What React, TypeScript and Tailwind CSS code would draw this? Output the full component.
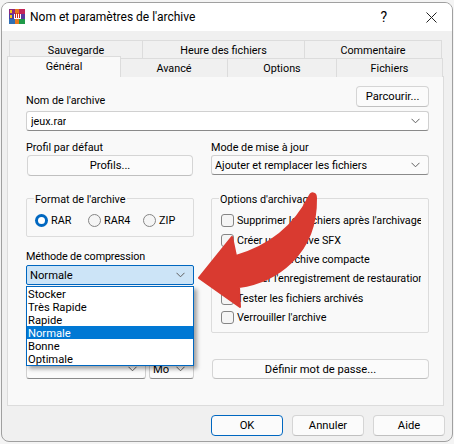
import React from "react";

const font = { fontFamily: 'Roboto, "Open Sans", sans-serif' };

function Chevron({ className = "" }: { className?: string }) {
  return (
    <svg width="9" height="6" viewBox="0 0 9 6" className={className} fill="none">
      <path d="M0.5 0.8 L4.5 4.8 L8.5 0.8" stroke="#5f5f5f" strokeWidth="1" />
    </svg>
  );
}

function Combo({ text, className = "" }: { text: string; className?: string }) {
  return (
    <div className={`flex items-center justify-between rounded-[3px] border border-[#d0d0d0] border-b-[#8a8a8a] bg-[#fbfbfb] pl-[3px] pr-[8px] ${className}`}>
      <span className="truncate">{text}</span>
      <Chevron className="shrink-0" />
    </div>
  );
}

function Btn({ text, className = "" }: { text: string; className?: string }) {
  return (
    <div className={`flex items-center justify-center rounded-[4px] border border-[#d5d5d5] border-b-[#c0c0c0] bg-[#fbfbfb] text-[11.2px] ${className}`}>
      {text}
    </div>
  );
}

function Radio({ label, checked = false, className = "" }: { label: string; checked?: boolean; className?: string }) {
  return (
    <div className={`flex items-center gap-[3px] ${className}`}>
      {checked ? (
        <span className="flex h-[13px] w-[13px] items-center justify-center rounded-full bg-[#0067c0]">
          <span className="h-[7px] w-[7px] rounded-full bg-white" />
        </span>
      ) : (
        <span className="h-[13px] w-[13px] rounded-full border border-[#858585] bg-[#f5f5f5]" />
      )}
      <span>{label}</span>
    </div>
  );
}

function Check({ label }: { label: string }) {
  return (
    <div className="flex h-[19.4px] items-center gap-[3px] whitespace-nowrap tracking-[-0.05px]">
      <span className="h-[13px] w-[13px] shrink-0 rounded-[3px] border border-[#858585] bg-[#f5f5f5]" />
      <span>{label}</span>
    </div>
  );
}

function Tab({ text, className = "" }: { text: string; className?: string }) {
  return (
    <div className={`flex items-center justify-center border border-b-0 border-[#dcdcdc] bg-[#f0f0f0] pt-[1px] ${className}`}>{text}</div>
  );
}

function RarIcon() {
  return (
    <svg width="16" height="16" viewBox="0 0 16 16" className="shrink-0">
      <rect x="0" y="0" width="6" height="5" fill="#8e2a7e" />
      <rect x="0" y="5" width="6" height="5" fill="#4a3fa5" />
      <rect x="0" y="10" width="6" height="5" fill="#2f6fb5" />
      <rect x="1" y="1" width="2" height="3" fill="#f5c518" />
      <rect x="1" y="6" width="2" height="3" fill="#f5c518" />
      <rect x="6" y="0" width="4" height="15" fill="#e8781e" />
      <rect x="10" y="0" width="6" height="5" fill="#c4245a" />
      <rect x="10" y="5" width="6" height="5" fill="#5a3aa0" />
      <rect x="10" y="10" width="6" height="5" fill="#1f9a48" />
      <rect x="5" y="5" width="7" height="5" fill="#ffffff" />
      <rect x="6" y="4" width="1" height="5" fill="#c8281e" />
      <rect x="8" y="4" width="1" height="5" fill="#c8281e" />
      <rect x="10" y="4" width="1" height="5" fill="#c8281e" />
    </svg>
  );
}

export default function App() {
  const items = ["Stocker", "Très Rapide", "Rapide", "Normale", "Bonne", "Optimale"];
  return (
    <div className="relative h-[444px] w-[454px] overflow-hidden bg-[#f4f4f4] pl-[1px] pt-[2px] text-[10.8px] leading-[13px] text-black" style={font}>
      <div className="flex h-[440px] w-[452px] flex-col overflow-hidden rounded-[8px] border border-[#a0a0a0] bg-[#f0f0f0]">
        <div className="flex h-[28px] shrink-0 items-center bg-white pl-[7px]">
          <RarIcon />
          <span className="ml-[5px] text-[12px]">Nom et paramètres de l'archive</span>
          <span className="ml-auto mr-[39px] text-[14px]">?</span>
          <svg width="11" height="11" viewBox="0 0 11 11" className="mr-[15px]" fill="none">
            <path d="M0.5 0.5 L10.5 10.5 M10.5 0.5 L0.5 10.5" stroke="#222" strokeWidth="1" />
          </svg>
        </div>

        <div className="flex flex-col pl-[5px] pt-[9px]">
          <div className="ml-[2px] flex h-[18px] w-[433px]">
            <Tab text="Sauvegarde" className="w-[134px]" />
            <Tab text="Heure des fichiers" className="w-[162px] border-l-0" />
            <Tab text="Commentaire" className="w-[137px] border-l-0" />
          </div>
          <div className="relative z-10 -mb-[1px] -mt-[2px] flex h-[21px] items-end">
            <div className="flex h-[21px] w-[114px] items-center justify-center border border-b-0 border-[#dcdcdc] bg-[#f9f9f9] pb-[1px]">Général</div>
            <Tab text="Avancé" className="h-[19px] w-[107px] border-l-0" />
            <Tab text="Options" className="h-[19px] w-[109px] border-l-0" />
            <Tab text="Fichiers" className="h-[19px] w-[106px] border-l-0" />
          </div>

          <div className="h-[330px] w-[437px] border border-[#dcdcdc] bg-[#f9f9f9] pl-[18px] pt-[9px]">
            <div className="flex h-[21px] w-[403px] items-end justify-between">
              <span>Nom de l'archive</span>
              <Btn text="Parcourir..." className="h-[21px] w-[73px]" />
            </div>
            <Combo text="jeux.rar" className="mt-[4px] h-[20px] w-[403px] bg-white pl-[4px]" />

            <div className="mt-[8px] flex gap-[17px]">
              <div className="flex w-[168px] flex-col">
                <div className="flex h-[16px] items-center">Profil par défaut</div>
                <Btn text="Profils..." className="ml-[1px] h-[21px] w-[166px]" />
                <div className="relative mt-[22px] flex h-[39px] items-center rounded-[2px] border border-[#dcdcdc] pl-[8px] pt-[5px]">
                  <span className="absolute -top-[6px] left-[7px] bg-[#f9f9f9] px-[1px]">Format de l'archive</span>
                  <Radio label="RAR" checked className="w-[53px]" />
                  <Radio label="RAR4" className="w-[55px]" />
                  <Radio label="ZIP" />
                </div>
                <div className="mt-[11px] flex h-[16px] items-center pt-[1px] tracking-[-0.15px]">Méthode de compression</div>
                <div className="relative mt-[1px] h-[20px]">
                  <div className="flex h-[20px] items-center justify-between rounded-[2px] border border-[#0067c0] bg-[#cce4f7] pl-[3px] pr-[8px] text-[11.2px]">
                    <span>Normale</span>
                    <Chevron />
                  </div>
                  <div className="absolute left-0 top-[21px] z-20 w-[168px] border border-[#0067c0] bg-white text-[11.2px] shadow-[3px_3px_4px_rgba(0,0,0,0.35)]">
                    {items.map((it) => (
                      <div key={it} className={`flex h-[13px] items-center pl-[1px] pt-[1px] ${it === "Normale" ? "bg-[#0078d4] text-white" : ""}`}>{it}</div>
                    ))}
                  </div>
                </div>
                <div className="mt-[74px] flex h-[20px] gap-[3px]">
                  <Combo text="" className="w-[120px]" />
                  <Combo text="Mo" className="w-[45px] pl-[2px] text-[11.2px]" />
                </div>
              </div>

              <div className="flex w-[218px] flex-col">
                <div className="flex h-[16px] items-center">Mode de mise à jour</div>
                <Combo text="Ajouter et remplacer les fichiers" className="h-[20px]" />
                <div className="relative mt-[23px] h-[135px] rounded-[2px] border border-[#dcdcdc] pl-[9px] pr-[7px] pt-[12px]">
                  <span className="absolute -top-[6px] left-[7px] bg-[#f9f9f9] px-[1px]">Options d'archivage</span>
                  <div className="overflow-hidden">
                    <Check label="Supprimer les fichiers après l'archivage" />
                    <Check label="Créer une archive SFX" />
                    <Check label="Créer une archive compacte" />
                    <Check label="Ajouter l'enregistrement de restauration" />
                    <Check label="Tester les fichiers archivés" />
                    <Check label="Verrouiller l'archive" />
                  </div>
                </div>
                <Btn text="Définir mot de passe..." className="ml-[1px] mt-[26px] h-[20px] w-[217px]" />
              </div>
            </div>
          </div>

          <div className="mt-[9px] flex w-[438px] justify-end gap-[9px]">
            <div className="flex h-[21px] w-[72px] items-center justify-center rounded-[4px] border border-[#0067c0] bg-[#fbfbfb] text-[11.2px]">OK</div>
            <Btn text="Annuler" className="h-[21px] w-[72px]" />
            <Btn text="Aide" className="h-[21px] w-[72px]" />
          </div>
        </div>
      </div>

      <svg width="454" height="444" viewBox="0 0 454 444" className="pointer-events-none absolute left-0 top-0 z-30">
        <path
          d="M309 197 C300 215 280 243 236 256 L232 237 L199 278 L240 307 L239 287 C275 282 317 255 316 198 C316 192 311 192 309 197 Z"
          fill="#d93a30"
          stroke="#d93a30"
          strokeWidth="2"
          strokeLinejoin="round"
        />
      </svg>
    </div>
  );
}
